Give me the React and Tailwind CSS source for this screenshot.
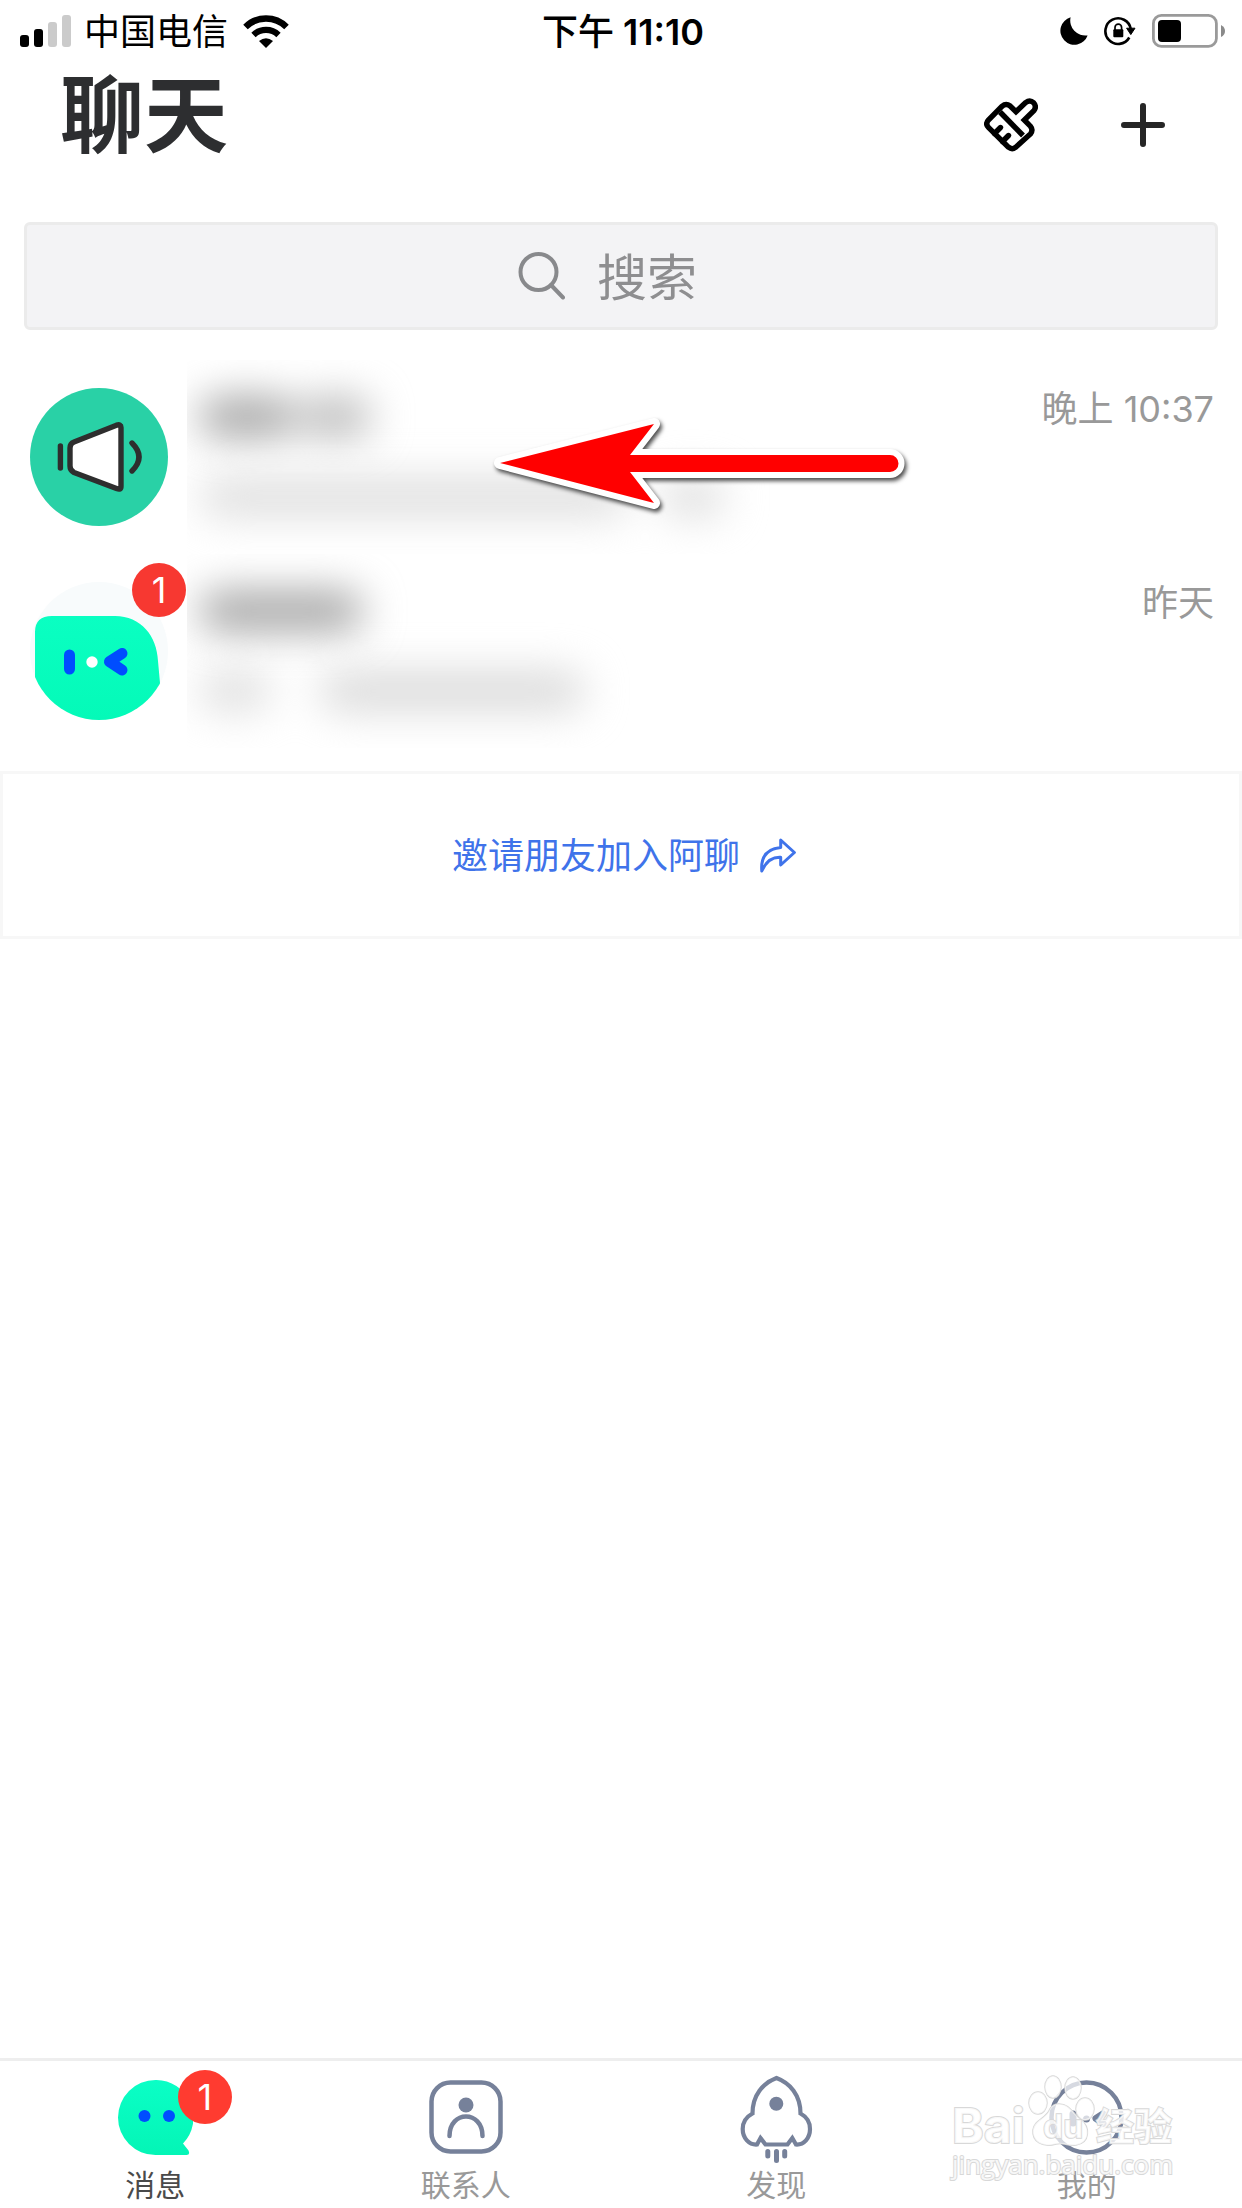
import React from 'react';

const SLATE = '#76819a';

function SignalIcon() {
  return (
    <svg width="52" height="32" viewBox="0 0 52 32" aria-hidden="true">
      <rect x="0" y="20" width="9" height="12" rx="3" />
      <rect x="14" y="14" width="9" height="18" rx="3" />
      <rect x="28" y="7" width="9" height="25" rx="3" fill="#cbcbcb" />
      <rect x="42" y="0" width="9" height="32" rx="3" fill="#cbcbcb" />
    </svg>
  );
}

function WifiIcon() {
  return (
    <svg width="46" height="33" viewBox="0 0 46 33" aria-hidden="true">
      <path d="M2.5 12 A29 29 0 0 1 43.5 12" fill="none" stroke="#000" strokeWidth="6.4" />
      <path d="M10.5 20 A18 18 0 0 1 35.5 20" fill="none" stroke="#000" strokeWidth="6.2" />
      <path d="M23 33 L16 26 Q23 20.5 30 26 Z" />
    </svg>
  );
}

function MoonIcon() {
  return (
    <svg width="28" height="28" viewBox="0 0 28 28" aria-hidden="true">
      <path d="M10.6 0.3 A15 15 0 0 0 27.6 18.4 A14 14 0 1 1 10.6 0.3 Z" />
    </svg>
  );
}

function RotationLockIcon() {
  return (
    <svg width="32" height="30" viewBox="0 0 32 30" aria-hidden="true">
      <path d="M25.3 21.5 A12.8 12.8 0 1 1 26.8 13" fill="none" stroke="#000" strokeWidth="2.6" />
      <path d="M22.6 12.2 H31 L26.8 18.6 Z" stroke="#000" strokeLinejoin="round" />
      <rect x="9.3" y="13.3" width="10" height="8" rx="1" />
      <path d="M11 14 V11.5 A3.3 3.3 0 0 1 17.6 11.5 V14" fill="none" stroke="#000" strokeWidth="1.7" />
    </svg>
  );
}

function BatteryIcon() {
  return (
    <svg width="74" height="34" viewBox="0 0 74 34" aria-hidden="true">
      <rect x="1.4" y="1.4" width="63" height="31" rx="8" fill="none" stroke="#9a9a9a" strokeWidth="2.8" />
      <rect x="6" y="6" width="23" height="22" rx="4" />
      <path d="M69 11 Q73 13 73 17 Q73 21 69 23 Z" fill="#8a8a8a" />
    </svg>
  );
}

function BrushIcon() {
  return (
    <svg width="54" height="54" viewBox="0 0 54 54" fill="none" stroke="#000" strokeWidth="5.4" strokeLinecap="round" aria-hidden="true">
      <path
        strokeLinejoin="miter"
        d="M18 8.3 Q22 5 26.2 8 L32 13.7 L41.6 4.6 Q46 1.4 49.6 4.8 Q53 8.6 49.8 12.8 L40.3 22 L46.4 28.2 Q49.5 32 46.4 36 L31.5 49.4 Q28 52 24.4 49.2 L4.4 29.4 Q1 26 4.4 22 Z"
      />
      <path d="M16 14 L39 37.5" strokeLinecap="butt" />
      <path d="M10.5 35.5 L16.5 29.5 M18.5 43.5 L24.5 37.5" />
    </svg>
  );
}

function PlusIcon() {
  return (
    <svg width="44" height="44" viewBox="0 0 44 44" fill="none" stroke="#262626" strokeWidth="6" strokeLinecap="round" aria-hidden="true">
      <path d="M22 3 V41 M3 22 H41" />
    </svg>
  );
}

function SearchIcon() {
  return (
    <svg className="shrink-0" width="48" height="48" viewBox="0 0 48 48" fill="none" stroke="#88898c" strokeWidth="4" strokeLinecap="round" aria-hidden="true">
      <circle cx="21.5" cy="20" r="18" />
      <path d="M34 33 L46 45.5" />
    </svg>
  );
}

function ShareIcon() {
  return (
    <svg width="36" height="36" viewBox="0 0 36 36" fill="none" stroke="#3f73ea" strokeWidth="3" strokeLinejoin="round" aria-hidden="true">
      <path d="M20.7 2 L34.4 14.5 L20.7 27 V19.2 Q8 18.5 1.8 33 Q0 11.5 20.7 9.6 Z" />
    </svg>
  );
}

function SpeakerAvatar() {
  return (
    <svg width="138" height="138" viewBox="0 0 138 138" aria-hidden="true">
      <circle cx="69" cy="69" r="69" fill="#29d1a6" />
      <g stroke="#2e2e2e" strokeWidth="5.4" strokeLinecap="round" strokeLinejoin="round" fill="none">
        <path d="M30.4 58 V80" />
        <path d="M40 60 Q40 55.5 44 54 L86.5 37.2 Q91 35.8 91 39.5 V98.5 Q91 102.4 86.5 100.6 L44 84.5 Q40 82.5 40 78 Z" fill="#fff" />
        <path d="M102 55 Q116 69 102 83" />
      </g>
    </svg>
  );
}

function WinkAvatar() {
  return (
    <svg width="138" height="138" viewBox="0 0 138 138" aria-hidden="true">
      <defs>
        <clipPath id="wink-clip">
          <circle cx="69" cy="69" r="69" />
        </clipPath>
        <linearGradient id="wink-fill" x1="0" y1="0" x2="0" y2="1">
          <stop offset="0" stopColor="#0affc2" />
          <stop offset="1" stopColor="#04fab8" />
        </linearGradient>
      </defs>
      <circle cx="69" cy="69" r="69" fill="#f8fbfc" />
      <path clipPath="url(#wink-clip)" fill="url(#wink-fill)" d="M5 50 Q5 34 22 34 H85 C111 34 127 54 128 79 L130 101 V138 H5 Z" />
      <path d="M39.5 73 V87" stroke="#004dff" strokeWidth="11" strokeLinecap="round" />
      <circle cx="62" cy="80" r="5.7" fill="#fff" />
      <path d="M92 71.5 L79.5 79.7 L92 88 L86 79.7 Z" fill="#004dff" />
      <path d="M92 71.5 L79.5 79.7 L92 88" fill="none" stroke="#004dff" strokeWidth="11" strokeLinecap="round" strokeLinejoin="round" />
    </svg>
  );
}

function MessagesIcon() {
  return (
    <svg width="75" height="75" viewBox="0 0 75 75" aria-hidden="true">
      <defs>
        <linearGradient id="bubble-fill" x1="0" y1="0" x2="0" y2="1">
          <stop offset="0" stopColor="#0affc6" />
          <stop offset="1" stopColor="#04f5b6" />
        </linearGradient>
      </defs>
      <path fill="url(#bubble-fill)" d="M37.5 0 A37.5 37.5 0 0 1 65 63.5 L70.5 70.5 Q72.5 75 68.5 75 H37.5 A37.5 37.5 0 0 1 37.5 0 Z" />
      <circle cx="26.5" cy="36" r="6" fill="#004dff" />
      <circle cx="51" cy="36" r="6" fill="#004dff" />
    </svg>
  );
}

function ContactsIcon() {
  return (
    <svg width="74" height="74" viewBox="0 0 74 74" fill="none" stroke={SLATE} strokeWidth="4.5" aria-hidden="true">
      <rect x="2.5" y="2.5" width="69" height="69" rx="19" />
      <circle cx="37" cy="25" r="7.5" fill={SLATE} stroke="none" />
      <path d="M20.5 56 C20.5 30 53.5 30 53.5 56" strokeLinecap="round" />
    </svg>
  );
}

function DiscoverIcon() {
  return (
    <svg className="overflow-visible" width="73" height="88" viewBox="0 -2 73 88" fill="none" stroke={SLATE} strokeWidth="4.2" aria-hidden="true">
      <path d="M36.5 3 C50 8 60.5 20 60.5 38.5 C67 42 70 48 70 54 C70 63 64 70 56 69.5 L52.3 63 L47.5 69.5 H25.5 L20.5 63 L17 69.5 C9 70 2.7 63 2.7 54 C2.7 48 6 42 12.5 38.5 C12.5 20 23 8 36.5 3 Z" />
      <circle cx="36.3" cy="28.7" r="7" fill={SLATE} stroke="none" />
      <path d="M27.8 76.5 V81 M36.5 76.5 V85.5 M44.7 76.5 V81" strokeWidth="5" strokeLinecap="round" />
    </svg>
  );
}

function MineIcon() {
  return (
    <svg width="75" height="75" viewBox="0 0 75 75" fill="none" stroke={SLATE} strokeWidth="4.5" strokeLinecap="round" strokeLinejoin="round" aria-hidden="true">
      <circle cx="37.5" cy="37.5" r="35" />
      <path d="M24 34 V43" strokeWidth="7" />
      <circle cx="37.5" cy="39" r="3.5" fill={SLATE} stroke="none" />
      <path d="M54 34 L47 38.5 L54 43.5" strokeWidth="7" />
    </svg>
  );
}

function PointerArrow() {
  const shape = 'M20 51 L174 12 L150 43 H410 A8.5 8.5 0 0 1 410 60 H150 L174 91 Z';
  return (
    <svg className="pointer-events-none absolute top-[52px] left-[480px] overflow-visible" width="430" height="110" viewBox="0 0 430 110" aria-hidden="true">
      <path className="drop-shadow-[2px_3px_2px_rgba(0,0,0,0.7)]" d={shape} fill="#fff" stroke="#fff" strokeWidth="12" strokeLinejoin="round" />
      <path d={shape} fill="#f00" />
    </svg>
  );
}

function Badge({ children, className }) {
  return (
    <span className={`absolute flex size-[54px] items-center justify-center rounded-full text-4xl text-white ${className}`}>
      {children}
    </span>
  );
}

function ChatRow({ avatar, badge, time, preview, children }) {
  return (
    <li className="relative">
      <button type="button" className="flex h-[194px] w-full items-stretch gap-[19px] pr-7 pl-[30px] text-left">
        <span className="relative self-center">
          {avatar}
          {badge && <Badge className="-top-[19px] -right-[18px] bg-[#f73831]">{badge}</Badge>}
        </span>
        <span className="flex flex-1 flex-col overflow-hidden pt-[13px]" aria-hidden="true">
          {preview}
        </span>
        <time className="pt-[29px] text-4xl leading-10 text-[#999]">{time}</time>
      </button>
      {children}
    </li>
  );
}

const tabs = [
  { label: '消息', icon: <MessagesIcon />, active: true, badge: '1' },
  { label: '联系人', icon: <ContactsIcon /> },
  { label: '发现', icon: <DiscoverIcon /> },
  { label: '我的', icon: <MineIcon /> },
];

function Watermark() {
  return (
    <div className="pointer-events-none absolute right-[62px] bottom-7 w-[228px] text-white/80 [-webkit-text-stroke:2px_#d8d8d8] [paint-order:stroke]">
      <div className="flex h-[76px] items-end">
        <span className="w-[76px] text-5xl leading-[44px] font-bold">Bai</span>
        <svg className="-mr-1 shrink-0 overflow-visible" width="72" height="73" viewBox="0 0 72 73" fill="rgba(255,255,255,0.7)" stroke="#d6d6d6" strokeWidth="1.5" aria-hidden="true">
          <ellipse cx="10" cy="28" rx="9" ry="11" />
          <ellipse cx="25" cy="12" rx="8" ry="11" />
          <ellipse cx="45" cy="13" rx="8" ry="11" />
          <ellipse cx="57" cy="34" rx="9" ry="11" />
          <path d="M31 29 C42 29 44 38 52 44 C63 52 62 68 48 70 C38 71 36 67 28 69 C14 73 4 66 5 55 C7 44 18 44 22 34 Q25 29 31 29 Z" />
          <text x="15" y="63" fontSize="32" fontWeight="700">du</text>
        </svg>
        <span className="text-[38px] leading-[44px] font-bold whitespace-nowrap">经验</span>
      </div>
      <div className="font-['Open_Sans','Noto_Sans',sans-serif] text-[26px] leading-8">jingyan.baidu.com</div>
    </div>
  );
}

export default function App() {
  return (
    <div className="flex min-h-screen flex-col bg-white font-['Inter','Noto_Sans_CJK_SC',sans-serif] text-black">
      <div className="grid h-[62px] grid-cols-[1fr_auto_1fr] items-center pr-4 pl-5">
        <div className="flex items-center">
          <SignalIcon />
          <span className="ml-3 pt-0.5 text-4xl leading-10">中国电信</span>
          <span className="ml-[15px]">
            <WifiIcon />
          </span>
        </div>
        <time className="pt-px text-4xl leading-10 font-semibold">
          <span className="font-medium">下午</span> 11:10
        </time>
        <div className="flex items-center justify-end gap-4">
          <MoonIcon />
          <RotationLockIcon />
          <BatteryIcon />
        </div>
      </div>

      <header className="flex h-40 items-start justify-between pr-[71px] pl-[60px]">
        <h1 className="pt-0.5 text-[84px] leading-[104px] font-bold text-[#2d2e30]">聊天</h1>
        <div className="flex h-[126px] items-center gap-[73px]">
          <button type="button" aria-label="清理" className="p-1">
            <BrushIcon />
          </button>
          <button type="button" aria-label="添加" className="p-1.5">
            <PlusIcon />
          </button>
        </div>
      </header>

      <label className="mx-6 flex h-[108px] items-center justify-center gap-8 rounded-md border-[3px] border-[#ebebeb] bg-[#f3f3f5]">
        <SearchIcon />
        <input
          type="search"
          aria-label="搜索"
          placeholder="搜索"
          className="w-32 bg-transparent pt-1 text-[50px] leading-[60px] text-[#8e8e90] outline-none placeholder:text-[#8e8e90]"
        />
      </label>

      <main className="flex-1 pt-[30px]">
        <ul>
          <ChatRow
            avatar={<SpeakerAvatar />}
            time="晚上 10:37"
            preview={
              <>
                <span className="mt-6 ml-3 flex gap-1 blur-[20px]">
                  <span className="h-10 w-24 rounded-full bg-[#a4a4a4]" />
                  <span className="h-10 w-[72px] rounded-full bg-[#bababa]" />
                </span>
                <span className="mt-10 ml-3 flex gap-8 blur-[20px]">
                  <span className="h-10 w-[430px] rounded-full bg-[#dfdfdf]" />
                  <span className="h-10 w-16 rounded-full bg-[#dfdfdf]" />
                </span>
              </>
            }
          >
            <PointerArrow />
          </ChatRow>
          <ChatRow
            avatar={<WinkAvatar />}
            badge="1"
            time="昨天"
            preview={
              <>
                <span className="mt-6 ml-3 flex blur-[20px]">
                  <span className="h-10 w-[164px] rounded-full bg-[#a4a4a4]" />
                </span>
                <span className="mt-10 ml-3 flex gap-12 blur-[20px]">
                  <span className="h-10 w-[72px] rounded-full bg-[#dfdfdf]" />
                  <span className="h-10 w-[266px] rounded-full bg-[#dadada]" />
                </span>
              </>
            }
          />
        </ul>

        <button
          type="button"
          className="mt-[23px] flex h-[168px] w-full items-center justify-center gap-5 border-[3px] border-[#f7f7f7] pt-0.5 pl-1.5 text-4xl text-[#3f73ea]"
        >
          邀请朋友加入阿聊
          <ShareIcon />
        </button>
      </main>

      <nav className="relative border-t-[3px] border-[#eee]">
        <ul className="grid grid-cols-4">
          {tabs.map((tab) => (
            <li key={tab.label}>
              <button
                type="button"
                aria-current={tab.active ? 'page' : undefined}
                className={`flex h-[147px] w-full flex-col items-center gap-1 pt-3 text-3xl leading-10 ${tab.active ? 'text-[#4a4a4a]' : 'text-[#999]'}`}
              >
                <span className="relative flex h-[88px] items-center">
                  {tab.icon}
                  {tab.badge && <Badge className="-top-[3px] -right-[39px] bg-[#ff3b30]">{tab.badge}</Badge>}
                </span>
                <span>{tab.label}</span>
              </button>
            </li>
          ))}
        </ul>
        <Watermark />
      </nav>
    </div>
  );
}
